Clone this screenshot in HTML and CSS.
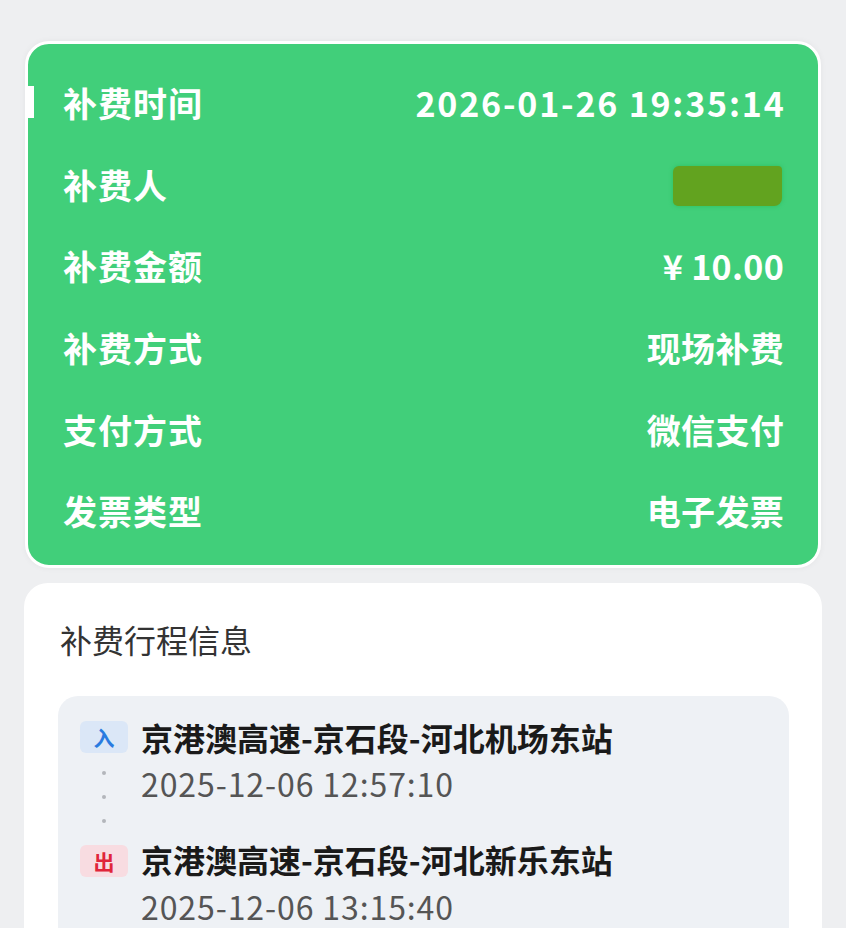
FILE: index.html
```html
<!DOCTYPE html>
<html lang="zh-CN">
<head>
<meta charset="utf-8">
<title>补费详情</title>
<link rel="stylesheet" href="styles.css">
</head>
<body>
<div class="page">
  <section class="summary">
    <span class="edge-mark"></span>
    <div class="row"><span class="label">补费时间</span><span class="value value-date">2026-01-26 19:35:14</span></div>
    <div class="row"><span class="label">补费人</span><span class="value"><span class="redact"></span></span></div>
    <div class="row"><span class="label">补费金额</span><span class="value">¥ 10.00</span></div>
    <div class="row"><span class="label">补费方式</span><span class="value">现场补费</span></div>
    <div class="row"><span class="label">支付方式</span><span class="value">微信支付</span></div>
    <div class="row"><span class="label">发票类型</span><span class="value">电子发票</span></div>
  </section>
  <section class="trip-card">
    <h2 class="trip-title">补费行程信息</h2>
    <div class="trip-box">
      <div class="rail">
        <span class="badge badge-in">入</span>
        <div class="dots"><i></i><i></i><i></i></div>
        <span class="badge badge-out">出</span>
      </div>
      <div class="info">
        <div class="station">京港澳高速-京石段-河北机场东站</div>
        <div class="time">2025-12-06 12:57:10</div>
        <div class="station station-2">京港澳高速-京石段-河北新乐东站</div>
        <div class="time">2025-12-06 13:15:40</div>
      </div>
    </div>
  </section>
</div>
</body>
</html>
```
FILE: styles.css
```css
html, body {
  margin: 0;
  padding: 0;
  background: #eeeff1;
  font-family: "Noto Sans CJK SC", "Noto Sans", sans-serif;
}
.page {
  width: 846px;
  height: 928px;
  overflow: hidden;
  padding-top: 41px;
  box-sizing: border-box;
}
.summary {
  position: relative;
  margin: 0 25px 0 25px;
  background: #41cf7a;
  border: 3px solid #ffffff;
  border-radius: 24px;
  padding: 18px 34px 13px 35px;
  box-shadow: 0 0 6px rgba(0,0,0,0.05);
}
.edge-mark {
  position: absolute;
  left: -1px;
  top: 42px;
  width: 7px;
  height: 32px;
  background: #ffffff;
}
.row {
  display: flex;
  justify-content: space-between;
  align-items: center;
  height: 81.6px;
  color: #ffffff;
  font-size: 34px;
  font-weight: 700;
}
.label { letter-spacing: 1px; }
.value { letter-spacing: 0.3px; }
.value-date { letter-spacing: 1.8px; margin-right: -1.5px; }
.redact {
  display: inline-block;
  width: 109px;
  height: 40px;
  margin-bottom: 5px;
  margin-right: 2px;
  background: #62a31f;
  border-radius: 6px 4px 8px 5px;
  box-shadow: 0 0 4px #2fbf60;
  vertical-align: middle;
}
.trip-card {
  margin: 15px 24px 0 24px;
  background: #ffffff;
  border-radius: 24px;
  padding: 34px 33px 40px 34px;
  height: 400px;
}
.trip-title {
  margin: 0;
  font-size: 32px;
  font-weight: 400;
  color: #333333;
  line-height: 44px;
  padding-left: 2px;
}
.trip-box {
  margin-top: 35px;
  background: #eef1f5;
  border-radius: 20px;
  display: flex;
  padding: 0 22px;
  height: 300px;
}
.rail {
  width: 48px;
  padding-top: 25px;
  display: flex;
  flex-direction: column;
  align-items: center;
}
.badge {
  width: 48px;
  height: 32px;
  border-radius: 6px;
  display: flex;
  align-items: center;
  justify-content: center;
  font-size: 21px;
  font-weight: 700;
}
.badge-in { background: #dbe7f7; color: #2a7be0; }
.badge-out { background: #f8dce1; color: #e0253a; }
.dots {
  height: 92px;
  box-sizing: border-box;
  padding-top: 18px;
  display: flex;
  flex-direction: column;
  align-items: center;
  gap: 20px;
}
.dots i {
  display: block;
  width: 4px;
  height: 4px;
  border-radius: 50%;
  background: #b3b6bb;
}
.info {
  padding-top: 19px;
  padding-left: 13px;
}
.station {
  font-size: 32px;
  font-weight: 700;
  line-height: 44px;
  color: #1a1a1a;
  letter-spacing: 0;
}
.station-2 { margin-top: 30px; }
.time {
  font-size: 32px;
  line-height: 48px;
  color: #555555;
  letter-spacing: 0.9px;
}
.time + .station-2 + .time { line-height: 50px; }
```
